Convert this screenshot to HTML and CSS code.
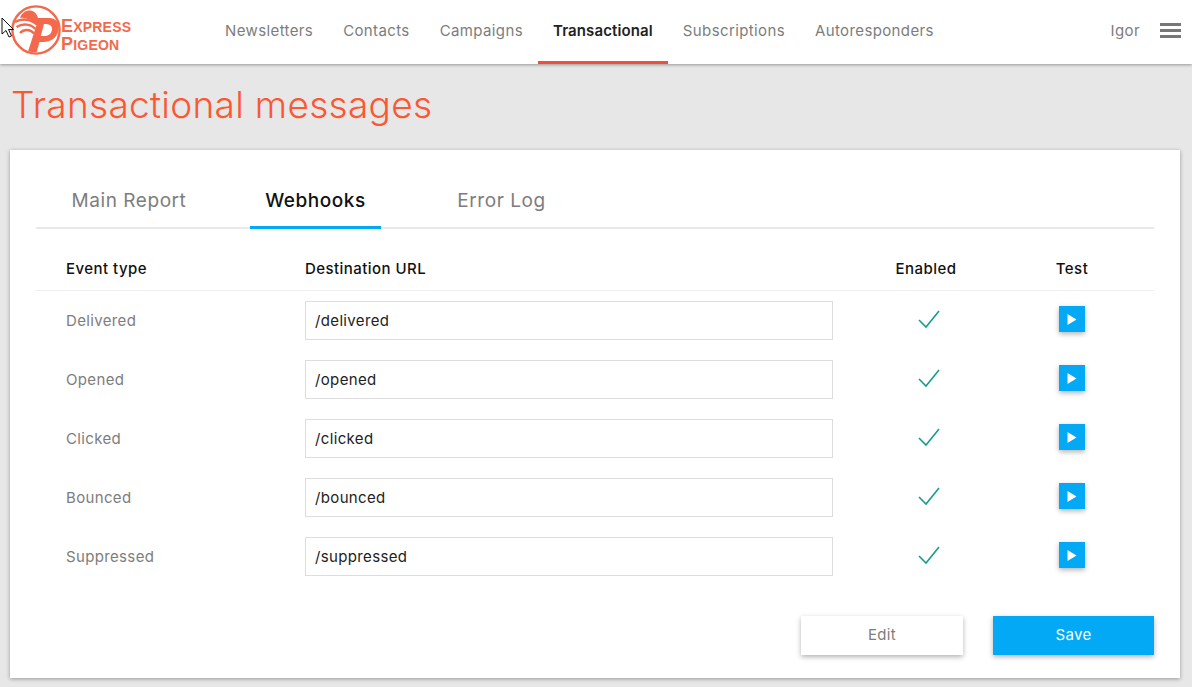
FILE: index.html
```html
<!DOCTYPE html>
<html lang="en">
<head>
  <meta charset="UTF-8">
  <title>Transactional messages</title>
  <link rel="stylesheet" href="styles.css">
</head>
<body>
  <header class="topbar">
    <a class="logo" href="#">
      <svg class="logo-mark" width="50" height="50" viewBox="0 0 50 50">
        <circle cx="25" cy="25" r="23.6" fill="none" stroke="#f4694b" stroke-width="2.4"/>
        <path fill-rule="evenodd" d="M9 13 C12 3 25 3 27 13 L38 13 C46 13 48.500 19 47.500 25 C46 33 40 37 32 37 L28.500 37 L25.500 47.500 L17 46.500 L25.500 20 C22 15 14 12 9 13 Z M33 19 L29.800 31 L34 31 C39 31 41 27 41 24 C41 20 38 19 33 19 Z" fill="#f4694b"/>
        <g fill="none" stroke="#f4694b" stroke-width="2.400">
          <path d="M4 17 C11 13 20 14 26 19.500"/>
          <path d="M5.500 22 C12 18 20 19 24.500 24"/>
          <path d="M9 28 C13 24 19 24 23 28.500"/>
        </g>
      </svg>
      <span class="logo-text"><span>Express</span><span>Pigeon</span></span>
    </a>
    <nav class="mainnav">
      <a href="#">Newsletters</a>
      <a href="#">Contacts</a>
      <a href="#">Campaigns</a>
      <a href="#" class="active">Transactional</a>
      <a href="#">Subscriptions</a>
      <a href="#">Autoresponders</a>
    </nav>
    <div class="usermenu">
      <span>Igor</span>
      <span class="burger"><i></i><i></i><i></i></span>
    </div>
  </header>

  <svg class="cursor" width="14" height="21" viewBox="0 0 14 21">
    <path d="M1 1 L1 17 L5 13.5 L8 20 L10.5 19 L7.5 12.5 L12.5 12.5 Z" fill="#fff" stroke="#111" stroke-width="1"/>
  </svg>

  <h1 class="page-title">Transactional messages</h1>

  <main class="card">
    <div class="tabs">
      <a href="#" class="tab tab-main">Main Report</a>
      <a href="#" class="tab tab-hooks active">Webhooks</a>
      <a href="#" class="tab tab-log">Error Log</a>
    </div>

    <div class="row row-head">
      <span>Event type</span>
      <span>Destination URL</span>
      <span class="center enabled-head">Enabled</span>
      <span class="center">Test</span>
    </div>

    <div class="row">
      <span class="event">Delivered</span>
      <input class="url" type="text" value="/delivered">
      <span class="center"><svg class="check" width="24" height="20" viewBox="0 0 24 20"><path d="M2 11 L9 18 L22 2" fill="none" stroke="#179c8a" stroke-width="1.6"/></svg></span>
      <span class="center"><button class="play"><svg width="10" height="11" viewBox="0 0 10 11"><path d="M0.5 0 L9.5 5.5 L0.5 11 Z" fill="#fff"/></svg></button></span>
    </div>
    <div class="row">
      <span class="event">Opened</span>
      <input class="url" type="text" value="/opened">
      <span class="center"><svg class="check" width="24" height="20" viewBox="0 0 24 20"><path d="M2 11 L9 18 L22 2" fill="none" stroke="#179c8a" stroke-width="1.6"/></svg></span>
      <span class="center"><button class="play"><svg width="10" height="11" viewBox="0 0 10 11"><path d="M0.5 0 L9.5 5.5 L0.5 11 Z" fill="#fff"/></svg></button></span>
    </div>
    <div class="row">
      <span class="event">Clicked</span>
      <input class="url" type="text" value="/clicked">
      <span class="center"><svg class="check" width="24" height="20" viewBox="0 0 24 20"><path d="M2 11 L9 18 L22 2" fill="none" stroke="#179c8a" stroke-width="1.6"/></svg></span>
      <span class="center"><button class="play"><svg width="10" height="11" viewBox="0 0 10 11"><path d="M0.5 0 L9.5 5.5 L0.5 11 Z" fill="#fff"/></svg></button></span>
    </div>
    <div class="row">
      <span class="event">Bounced</span>
      <input class="url" type="text" value="/bounced">
      <span class="center"><svg class="check" width="24" height="20" viewBox="0 0 24 20"><path d="M2 11 L9 18 L22 2" fill="none" stroke="#179c8a" stroke-width="1.6"/></svg></span>
      <span class="center"><button class="play"><svg width="10" height="11" viewBox="0 0 10 11"><path d="M0.5 0 L9.5 5.5 L0.5 11 Z" fill="#fff"/></svg></button></span>
    </div>
    <div class="row">
      <span class="event">Suppressed</span>
      <input class="url" type="text" value="/suppressed">
      <span class="center"><svg class="check" width="24" height="20" viewBox="0 0 24 20"><path d="M2 11 L9 18 L22 2" fill="none" stroke="#179c8a" stroke-width="1.6"/></svg></span>
      <span class="center"><button class="play"><svg width="10" height="11" viewBox="0 0 10 11"><path d="M0.5 0 L9.5 5.5 L0.5 11 Z" fill="#fff"/></svg></button></span>
    </div>

    <div class="actions">
      <button class="btn btn-edit">Edit</button>
      <button class="btn btn-save">Save</button>
    </div>
  </main>
</body>
</html>
```

FILE: styles.css
```css
/* Base styling */
html, body {
  height: 100%;
}

body {
  font-family: Inter, 'Open Sans', sans-serif;
  background-color: #e7e7e7;
  color: #7d7d7d;
  margin: 0;
  overflow: hidden;
}

a {
  text-decoration: none;
  color: inherit;
}

/* Top bar */
.topbar {
  display: flex;
  align-items: stretch;
  height: 64px;
  background: #fff;
  box-shadow: 0 1px 3px rgba(0,0,0,0.35);
}

.logo {
  display: flex;
  align-items: center;
  width: 210px;
  padding-left: 11px;
  box-sizing: border-box;
  color: #f4694b;
  margin-top: -4px;
}

.logo-text {
  display: flex;
  flex-direction: column;
  margin-top: 12px;
  font-family: 'Liberation Sans', sans-serif;
  font-weight: bold;
  font-size: 14px;
  line-height: 17px;
  letter-spacing: 0.2px;
  text-transform: uppercase;
}

.logo-text span:first-letter {
  font-size: 18px;
}

.mainnav {
  display: flex;
  font-size: 15px;
  letter-spacing: 0.38px;
}

.mainnav a {
  display: flex;
  align-items: center;
  padding: 0 15px;
  height: 61px;
  border-bottom: 3px solid transparent;
}

.mainnav a.active {
  color: #222;
  font-weight: 600;
  letter-spacing: 0.12px;
  border-bottom-color: #ef4f3d;
}

.usermenu {
  display: flex;
  align-items: center;
  gap: 20px;
  margin-left: auto;
  padding-right: 11px;
  font-size: 15px;
  letter-spacing: 0.42px;
  height: 61px;
}

.burger {
  display: flex;
  flex-direction: column;
  gap: 3px;
  width: 21px;
}

.burger i {
  display: block;
  height: 3px;
  background: #777;
}

.cursor {
  position: absolute;
  left: 1px;
  top: 17px;
}

/* Page title */
.page-title {
  margin: 21px 0 25px 11px;
  height: 40px;
  color: #fb5733;
  font-size: 37px;
  line-height: 40px;
  font-weight: 300;
  letter-spacing: 0.3px;
}

/* Card */
.card {
  margin: 0 12px 0 10px;
  height: 528px;
  box-sizing: border-box;
  padding: 0 26px;
  background: #fff;
  box-shadow: 0 1px 4px rgba(0,0,0,0.35);
}

.tabs {
  display: flex;
  height: 79px;
  border-bottom: 2px solid #e9e9e9;
  font-size: 19px;
  letter-spacing: 0.55px;
  box-sizing: border-box;
}

.tab {
  display: flex;
  align-items: center;
  justify-content: center;
  height: 79px;
  padding-top: 24px;
  box-sizing: border-box;
  border-bottom: 3px solid transparent;
  white-space: nowrap;
}

.tab-main {
  margin-left: 21px;
  width: 144px;
}

.tab-hooks {
  margin-left: 49px;
  width: 131px;
}

.tab-log {
  margin-left: 61px;
  width: 119px;
}

.tab.active {
  color: #111;
  font-weight: 500;
  border-bottom-color: #03a9f4;
}

/* Webhook table */
.row {
  display: grid;
  grid-template-columns: 269px 528px 190px 98px;
  align-items: center;
  height: 59px;
  font-size: 15px;
  letter-spacing: 0.35px;
}

.row-head {
  height: 62px;
  box-sizing: border-box;
  padding-top: 18px;
  border-bottom: 1px solid #eee;
  color: #111;
  font-weight: 500;
  letter-spacing: 0.45px;
}

.row-head span:first-child,
.event {
  padding-left: 30px;
}

.enabled-head {
  padding-right: 4px;
}

.center {
  display: flex;
  justify-content: center;
}

.check {
  margin-top: -3px;
  margin-left: 2px;
}

.url {
  box-sizing: border-box;
  width: 528px;
  height: 39px;
  padding: 0 9px;
  border: 1px solid #ddd;
  font: inherit;
  letter-spacing: 0.35px;
  color: #222;
  outline: none;
}

.play {
  display: flex;
  align-items: center;
  justify-content: center;
  width: 26px;
  height: 26px;
  margin-top: -3px;
  padding: 0;
  border: none;
  background: #03a9f4;
  box-shadow: 0 2px 5px rgba(0,0,0,0.3);
}

/* Buttons */
.actions {
  display: flex;
  justify-content: flex-end;
  gap: 30px;
  margin-top: 30px;
}

.btn {
  width: 162px;
  height: 39px;
  padding: 0 0 2px;
  border: none;
  font: inherit;
  font-size: 15px;
  letter-spacing: 0.35px;
  box-shadow: 0 2px 5px rgba(0,0,0,0.3);
}

.btn-edit {
  background: #fff;
  color: #7d7d7d;
}

.btn-save {
  width: 161px;
  background: #03a9f4;
  color: #fff;
}
```
